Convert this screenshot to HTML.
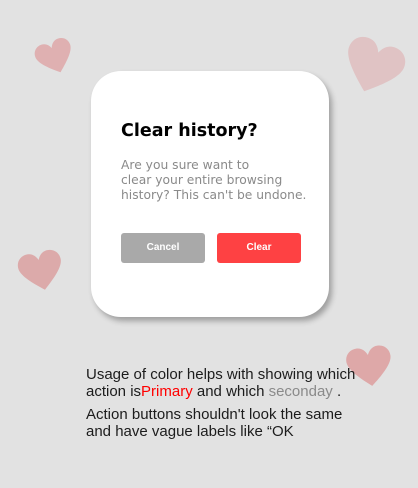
<!DOCTYPE html>
<html><head><meta charset="utf-8"><style>
body{margin:0;width:418px;height:488px;background:#e2e2e2;position:relative;overflow:hidden;font-family:"Liberation Sans",sans-serif}
.h{position:absolute;overflow:visible}
.card{position:absolute;left:91px;top:71px;width:238px;height:246px;background:#fff;border-radius:30px;box-shadow:3px 4px 6px rgba(0,0,0,.3)}
.t{position:absolute;left:30px;top:50px;font:bold 17.5px "DejaVu Sans",sans-serif;color:#000;margin:0}
.b{position:absolute;left:30px;top:87px;font:12.3px/15px "DejaVu Sans",sans-serif;color:#8a8a8a;white-space:nowrap}
.btn{position:absolute;top:162px;width:84px;height:30px;border-radius:3px;color:#fff;font:bold 10px "Liberation Sans",sans-serif;text-align:center;line-height:30px}
.txt{position:absolute;left:86px;font-size:15px;color:#1c1c1c;line-height:17px;white-space:nowrap}
</style></head><body>
<svg class="h" style="left:36px;top:40px" width="38" height="34" viewBox="0 0 100 92"><path transform="rotate(-20 50 46)" d="M50 90C20 65 0 45 0 28C0 12 12 2 26 2C38 2 46 10 50 20C54 10 62 2 74 2C88 2 100 12 100 28C100 45 80 65 50 90Z" fill="#dfb0b1"/></svg>
<svg class="h" style="left:343px;top:40px" width="60" height="54" viewBox="0 0 100 92"><path transform="rotate(20 50 46)" d="M50 90C20 65 0 45 0 28C0 12 12 2 26 2C38 2 46 10 50 20C54 10 62 2 74 2C88 2 100 12 100 28C100 45 80 65 50 90Z" fill="#e0c3c4"/></svg>
<svg class="h" style="left:19px;top:251px" width="44" height="40" viewBox="0 0 100 92"><path transform="rotate(-12 50 46)" d="M50 90C20 65 0 45 0 28C0 12 12 2 26 2C38 2 46 10 50 20C54 10 62 2 74 2C88 2 100 12 100 28C100 45 80 65 50 90Z" fill="#dcaaaa"/></svg>
<svg class="h" style="left:346px;top:346px" width="47" height="41" viewBox="0 0 100 92"><path transform="rotate(-8 50 46)" d="M50 90C20 65 0 45 0 28C0 12 12 2 26 2C38 2 46 10 50 20C54 10 62 2 74 2C88 2 100 12 100 28C100 45 80 65 50 90Z" fill="#dea8a8"/></svg>
<div class="card">
<div class="t">Clear history?</div>
<div class="b">Are you sure want to<br>clear your entire browsing<br>history? This can't be undone.</div>
<div class="btn" style="left:30px;background:#a9a9a9">Cancel</div>
<div class="btn" style="left:126px;background:#fe4143">Clear</div>
</div>
<div class="txt" style="top:366px">Usage of color helps with showing which<br>action is<span style="color:#f00">Primary</span> and which <span style="color:#8a8a8a">seconday</span> .</div>
<div class="txt" style="top:406px">Action buttons shouldn't look the same<br>and have vague labels like “OK</div>
</body></html>
